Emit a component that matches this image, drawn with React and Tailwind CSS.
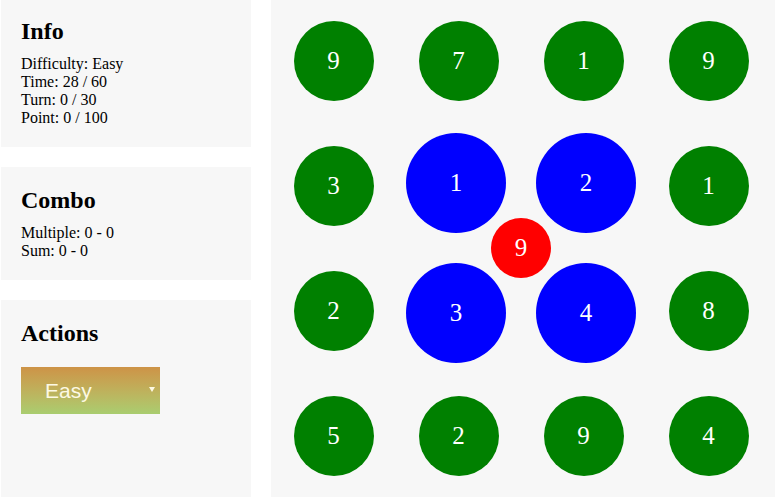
import React from "react";

const grid = [
  [9, 7, 1, 9],
  [3, null, null, 1],
  [2, null, null, 8],
  [5, 2, 9, 4],
];

function Panel({ title, children, className = "" }) {
  return (
    <div className={`bg-[#f7f7f7] px-[20px] pt-[19px] pb-[20px] ${className}`}>
      <h2 className="text-[24px] leading-[28px] font-bold text-black">{title}</h2>
      {children}
    </div>
  );
}

export default function App() {
  return (
    <div className="bg-white w-[775px] h-[497px] overflow-hidden">
      <div className="flex gap-[20px] ml-[1px] mt-[-2px] font-['Liberation_Serif',serif] text-black">
        <div className="w-[250px] flex flex-col gap-[20px]">
          <Panel title="Info">
            <div className="mt-[10px] text-[16px] leading-[18px]">
              <div>Difficulty: Easy</div>
              <div>Time: 28 / 60</div>
              <div>Turn: 0 / 30</div>
              <div>Point: 0 / 100</div>
            </div>
          </Panel>
          <Panel title="Combo">
            <div className="mt-[10px] text-[16px] leading-[18px]">
              <div>Multiple: 0 - 0</div>
              <div>Sum: 0 - 0</div>
            </div>
          </Panel>
          <Panel title="Actions" className="flex-1">
            <div className="mt-[20px] w-[139px] h-[47px] bg-gradient-to-b from-[#cd9347] to-[#a9cd70] flex items-center pl-[24px] pr-[5px] font-['Liberation_Sans',sans-serif] text-[21px] text-[#fdf9e4]">
              <span className="flex-1">Easy</span>
              <span className="w-0 h-0 border-l-[3px] border-r-[3px] border-t-[5px] border-l-transparent border-r-transparent border-t-[#fdf9e4] mb-[2px]"></span>
            </div>
          </Panel>
        </div>
        <div className="relative w-[504px] h-[500px] bg-[#f7f7f7]">
          <div className="grid grid-cols-[repeat(4,125px)] grid-rows-[repeat(4,125px)]">
            {grid.flatMap((row, r) =>
              row.map((v, c) => (
                <div key={`${r}-${c}`} className="flex items-center justify-center">
                  {v !== null && (
                    <div className="w-[80px] h-[80px] rounded-full bg-[#008000] flex items-center justify-center text-white text-[25px]">
                      {v}
                    </div>
                  )}
                </div>
              ))
            )}
          </div>
          <div className="absolute left-[135px] top-[135px] w-[230px] h-[230px]">
            <div className="grid grid-cols-[100px_100px] grid-rows-[100px_100px] gap-[30px]">
              {[1, 2, 3, 4].map((v) => (
                <div key={v} className="w-[100px] h-[100px] rounded-full bg-[#0000ff] flex items-center justify-center text-white text-[25px]">
                  {v}
                </div>
              ))}
            </div>
            <div className="absolute left-[85px] top-[85px] w-[60px] h-[60px] rounded-full bg-[#ff0000] flex items-center justify-center text-white text-[25px]">
              9
            </div>
          </div>
        </div>
      </div>
    </div>
  );
}
